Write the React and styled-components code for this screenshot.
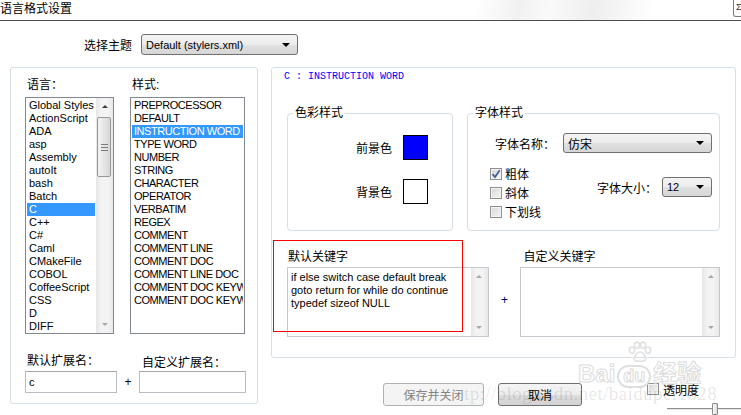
import React from 'react'
import styled, { createGlobalStyle } from 'styled-components'

const GlobalStyle = createGlobalStyle`
	html, body {
		margin: 0;
		padding: 0;
		background: #fff;
	}
	body {
		font-family: "Liberation Sans", "Noto Sans CJK SC", sans-serif;
		font-size: 12px;
		color: #000;
	}
	* {
		box-sizing: border-box;
	}
`

const languages = [
	'Global Styles', 'ActionScript', 'ADA', 'asp', 'Assembly', 'autoIt', 'bash', 'Batch', 'C',
	'C++', 'C#', 'Caml', 'CMakeFile', 'COBOL', 'CoffeeScript', 'CSS', 'D', 'DIFF', 'Erlang',
]
const styleNames = [
	'PREPROCESSOR', 'DEFAULT', 'INSTRUCTION WORD', 'TYPE WORD', 'NUMBER', 'STRING', 'CHARACTER',
	'OPERATOR', 'VERBATIM', 'REGEX', 'COMMENT', 'COMMENT LINE', 'COMMENT DOC', 'COMMENT LINE DOC',
	'COMMENT DOC KEYWORD', 'COMMENT DOC KEYWORD ERROR',
]

function Scrollbar({ thumb }) {
	return (
		<ScrollTrack>
			<ScrollButton><Arrow $up $dark={thumb} /></ScrollButton>
			{thumb ? <Thumb><Grip /></Thumb> : null}
			<ScrollFill />
			<ScrollButton><Arrow /></ScrollButton>
		</ScrollTrack>
	)
}

function Check({ checked, children }) {
	return (
		<CheckRow>
			<Box>{checked && <svg width="10" height="10" viewBox="0 0 10 10"><path d="M1.5 5.2 L4 8 L8.7 1.2" fill="none" stroke="#4a5e96" strokeWidth="1.8" /></svg>}</Box>
			<span>{children}</span>
		</CheckRow>
	)
}

export default function App() {
	return (
		<Window>
			<GlobalStyle />
			<TitleBar>
				<Title>语言格式设置</Title>
				<CloseBox>Σ</CloseBox>
			</TitleBar>

			<ThemeRow>
				<span>选择主题</span>
				<Combo $w={157}>
					<span>Default (stylers.xml)</span>
					<Caret />
				</Combo>
			</ThemeRow>

			<Body>
				<LeftGroup>
					<ListsRow>
						<ListCol>
							<ColLabel>语言：</ColLabel>
							<ListBox $w={89}>
								<Items>
									{languages.map(l => <Item key={l} $selected={l === 'C'}>{l}</Item>)}
								</Items>
								<Scrollbar thumb />
							</ListBox>
						</ListCol>
						<ListCol>
							<ColLabel>样式:</ColLabel>
							<ListBox $w={115}>
								<Items $caps>
									{styleNames.map((s, i) => <Item key={i} $selected={s === 'INSTRUCTION WORD'}>{s}</Item>)}
								</Items>
							</ListBox>
						</ListCol>
					</ListsRow>

					<ExtGrid>
						<ExtLabel>默认扩展名：</ExtLabel>
						<span />
						<ExtLabel $shift>自定义扩展名：</ExtLabel>
						<TextBox>c</TextBox>
						<Plus>+</Plus>
						<TextBox />
					</ExtGrid>
				</LeftGroup>

				<RightCol>
					<RightGroup>
						<StyleTitle>C : INSTRUCTION WORD</StyleTitle>
						<GroupsRow>
							<Group $w={166}>
								<Legend>色彩样式</Legend>
								<ColorRows>
									<ColorRow>
										<span>前景色</span>
										<Swatch $color="#0000ff" />
									</ColorRow>
									<ColorRow>
										<span>背景色</span>
										<Swatch $color="#ffffff" />
									</ColorRow>
								</ColorRows>
							</Group>
							<Group $w={253}>
								<Legend>字体样式</Legend>
								<FontNameRow>
									<span>字体名称：</span>
									<Combo $grow $h={20}>
										<ComboText>仿宋</ComboText>
										<Caret />
									</Combo>
								</FontNameRow>
								<FontOptions>
									<CheckList>
										<Check checked>粗体</Check>
										<Check>斜体</Check>
										<Check>下划线</Check>
									</CheckList>
									<SizeBox>
										<span>字体大小：</span>
										<Combo $w={50} $h={20}>
											<span>12</span>
											<Caret />
										</Combo>
									</SizeBox>
								</FontOptions>
							</Group>
						</GroupsRow>

						<KeywordsRow>
							<KwCol $w={203}>
								<KwLabel>默认关键字</KwLabel>
								<KwArea>
									<KwText>if else switch case default break goto return for while do continue typedef sizeof NULL</KwText>
									<Scrollbar />
								</KwArea>
							</KwCol>
							<KwPlus>+</KwPlus>
							<KwCol $w={201}>
								<KwLabel $indent>自定义关键字</KwLabel>
								<KwArea>
									<KwText />
									<Scrollbar />
								</KwArea>
							</KwCol>
						</KeywordsRow>

						<RedMark />
					</RightGroup>

					<ButtonRow>
						<Button $disabled $w={101}>保存并关闭</Button>
						<Button $w={84}>取消</Button>
						<Transparency>
							<OpacityCheck>
								<Box />
								<span>透明度</span>
							</OpacityCheck>
							<Slider><SliderThumb /></Slider>
						</Transparency>
					</ButtonRow>
				</RightCol>
			</Body>

			<WatermarkLogo>
				<svg width="26" height="22" viewBox="0 0 42 34">
					<g fill="none" stroke="#e0e0e0" strokeWidth="2.6">
						<ellipse cx="8" cy="14" rx="4" ry="5" />
						<ellipse cx="16" cy="6" rx="4" ry="5" />
						<ellipse cx="26" cy="6" rx="4" ry="5" />
						<ellipse cx="34" cy="14" rx="4" ry="5" />
						<path d="M12 29 C12 20 18 17 21 17 C24 17 30 20 30 29 C30 33 12 33 12 29 Z" />
					</g>
				</svg>
				<LogoText>Bai<LogoDu>du</LogoDu>经验</LogoText>
			</WatermarkLogo>
			<WatermarkUrl>tp://blog.csdn.net/baidupei1828</WatermarkUrl>
		</Window>
	)
}

const Window = styled.div`
	position: relative;
	width: 741px;
	height: 415px;
	overflow: hidden;
	background: #fff;
`
const TitleBar = styled.div`
	display: flex;
	justify-content: space-between;
	align-items: flex-start;
	height: 21px;
	border-bottom: 1px solid #4f4f4f;
	background: linear-gradient(100deg, #fff 0%, #fff 64%, #f1f1f1 70%, #fafafa 74%, #eeeeee 80%, #fff 88%, #fff 100%);
`
const Title = styled.div`
	font-size: 12px;
	line-height: 19px;
`
const CloseBox = styled.div`
	width: 14px;
	height: 17px;
	margin-right: -6px;
	border: 1px solid #7a7a7a;
	border-top: none;
	border-radius: 0 0 0 3px;
	font-size: 9px;
	line-height: 15px;
	padding-left: 2px;
	color: #333;
`
const ThemeRow = styled.div`
	display: flex;
	align-items: center;
	gap: 9px;
	height: 21px;
	margin-top: 13px;
	padding-left: 84px;
`
const Combo = styled.div`
	display: flex;
	align-items: center;
	justify-content: space-between;
	width: ${p => (p.$w ? p.$w + 'px' : 'auto')};
	flex: ${p => (p.$grow ? 1 : 'none')};
	height: ${p => p.$h || 21}px;
	padding: 0 7px 0 4px;
	border: 1px solid #707070;
	border-radius: 3px;
	background: linear-gradient(#f4f4f4, #ececec 50%, #e0e0e0 52%, #d6d6d6);
	font-size: 11px;
	white-space: nowrap;
`
const ComboText = styled.span`
	font-size: 12px;
`
const Caret = styled.span`
	width: 0;
	height: 0;
	border-left: 4px solid transparent;
	border-right: 4px solid transparent;
	border-top: 4px solid #000;
`
const Body = styled.div`
	display: flex;
	align-items: flex-start;
	margin-top: 12px;
	padding-left: 10px;
`
const LeftGroup = styled.div`
	width: 248px;
	height: 337px;
	padding: 10px 0 0 14px;
	border: 1px solid #d5dfe5;
	border-radius: 3px;
`
const ListsRow = styled.div`
	display: flex;
	gap: 16px;
`
const ListCol = styled.div`
	display: flex;
	flex-direction: column;
`
const ColLabel = styled.div`
	height: 14px;
	line-height: 14px;
	margin-bottom: 5px;
	padding-left: 2px;
`
const ListBox = styled.div`
	display: flex;
	width: ${p => p.$w}px;
	height: 237px;
	border: 1px solid #828790;
	background: #fff;
	overflow: hidden;
`
const Items = styled.div`
	flex: 1;
	min-width: 0;
	padding: 1px;
	overflow: hidden;
	letter-spacing: ${p => (p.$caps ? '-0.45px' : '0')};
`
const Item = styled.div`
	height: 13px;
	line-height: 13px;
	padding-left: 2px;
	font-size: 11px;
	white-space: nowrap;
	overflow: hidden;
	background: ${p => (p.$selected ? '#3399ff' : 'transparent')};
	color: ${p => (p.$selected ? '#fff' : '#000')};
`
const ScrollTrack = styled.div`
	display: flex;
	flex-direction: column;
	width: 17px;
	flex: none;
	background: linear-gradient(90deg, #e6e6e6, #f3f3f3 30%, #f3f3f3 70%, #e8e8e8);
`
const ScrollButton = styled.div`
	display: flex;
	align-items: center;
	justify-content: center;
	height: 17px;
	flex: none;
`
const Arrow = styled.span`
	width: 0;
	height: 0;
	border-left: 3px solid transparent;
	border-right: 3px solid transparent;
	${p => (p.$up ? 'border-bottom' : 'border-top')}: 3px solid ${p => (p.$dark ? '#3c3c3c' : '#a8a8a8')};
`
const Thumb = styled.div`
	display: flex;
	align-items: center;
	justify-content: center;
	height: 60px;
	margin: 2px 2px 0 1px;
	border: 1px solid #979797;
	border-radius: 2px;
	background: linear-gradient(90deg, #f2f2f2, #e6e6e6 50%, #d6d6d6);
`
const Grip = styled.span`
	width: 7px;
	height: 7px;
	background: repeating-linear-gradient(#7a7a7a 0 1px, transparent 1px 3px);
`
const ScrollFill = styled.div`
	flex: 1;
`
const ExtGrid = styled.div`
	display: grid;
	grid-template-columns: 92px 22px 107px;
	grid-template-rows: 16px 22px;
	row-gap: 1px;
	margin-top: 20px;
`
const ExtLabel = styled.div`
	line-height: 14px;
	padding-left: ${p => (p.$shift ? 3 : 2)}px;
	margin-top: ${p => (p.$shift ? 2 : 0)}px;
`
const TextBox = styled.div`
	height: 22px;
	padding: 0 3px;
	border: 1px solid #b9bdc4;
	border-top-color: #a4a9b0;
	font-size: 11px;
	line-height: 20px;
	background: #fff;
`
const Plus = styled.div`
	text-align: center;
	line-height: 22px;
	font-size: 12px;
`
const RightCol = styled.div`
	display: flex;
	flex-direction: column;
	width: 465px;
	margin-left: 13px;
`
const RightGroup = styled.div`
	position: relative;
	height: 291px;
	padding: 3px 15px 0 15px;
	border: 1px solid #d5dfe5;
	border-radius: 3px;
`
const StyleTitle = styled.div`
	margin-left: -3px;
	font-family: "Liberation Mono", monospace;
	font-size: 10px;
	line-height: 12px;
	color: #0000ff;
	white-space: pre;
`
const GroupsRow = styled.div`
	display: flex;
	gap: 14px;
	margin-top: 30px;
`
const Group = styled.div`
	width: ${p => p.$w}px;
	height: 118px;
	border: 1px solid #d5dfe5;
	border-radius: 4px;
`
const Legend = styled.div`
	width: fit-content;
	margin: -8px 0 0 5px;
	padding: 0 2px;
	line-height: 14px;
	background: #fff;
`
const ColorRows = styled.div`
	display: flex;
	flex-direction: column;
	align-items: flex-end;
	gap: 19px;
	margin-top: 15px;
	padding-right: 24px;
`
const ColorRow = styled.div`
	display: flex;
	align-items: center;
	gap: 11px;
`
const Swatch = styled.div`
	width: 25px;
	height: 25px;
	border: 1px solid #000;
	background: ${p => p.$color};
`
const FontNameRow = styled.div`
	display: flex;
	align-items: center;
	gap: 8px;
	margin-top: 13px;
	padding: 0 7px 0 27px;
`
const FontOptions = styled.div`
	display: flex;
	align-items: flex-start;
	margin-top: 11px;
	padding: 0 7px 0 22px;
`
const CheckList = styled.div`
	display: flex;
	flex-direction: column;
`
const CheckRow = styled.div`
	display: flex;
	align-items: center;
	gap: 3px;
	height: 19px;
`
const Box = styled.span`
	display: flex;
	align-items: center;
	justify-content: center;
	width: 12px;
	height: 12px;
	flex: none;
	border: 1px solid #8f8f8f;
	box-shadow: inset 0 0 0 1px #f4f4f4;
	background: linear-gradient(135deg, #d6d6d6, #f6f6f6);
`
const SizeBox = styled.div`
	display: flex;
	align-items: center;
	gap: 5px;
	margin: 13px 0 0 auto;
`
const KeywordsRow = styled.div`
	display: flex;
	align-items: flex-start;
	margin-top: 19px;
`
const KwCol = styled.div`
	display: flex;
	flex-direction: column;
	width: ${p => p.$w}px;
`
const KwLabel = styled.div`
	line-height: 14px;
	margin-bottom: 3px;
	padding-left: ${p => (p.$indent ? 3 : 1)}px;
`
const KwArea = styled.div`
	display: flex;
	height: 70px;
	border: 1px solid #c4c8ce;
	background: #fff;
`
const KwText = styled.div`
	flex: 1;
	padding: 3px 3px;
	font-size: 11px;
	line-height: 13px;
`
const KwPlus = styled.div`
	width: 32px;
	margin-top: 43px;
	text-align: center;
	line-height: 14px;
	color: #000060;
`
const RedMark = styled.div`
	position: absolute;
	left: 1px;
	top: 172px;
	width: 190px;
	height: 92px;
	border: 1px solid #ff0000;
	pointer-events: none;
`
const ButtonRow = styled.div`
	display: flex;
	align-items: flex-start;
	margin-top: 25px;
	padding-left: 112px;
`
const Button = styled.div`
	display: flex;
	align-items: center;
	justify-content: center;
	flex: none;
	width: ${p => p.$w}px;
	height: 23px;
	margin-right: 14px;
	border: 1px solid ${p => (p.$disabled ? '#adb2b5' : '#707070')};
	border-radius: 3px;
	background: ${p => (p.$disabled
		? '#f4f4f4'
		: 'linear-gradient(#f4f4f4, #ececec 50%, #dedede 52%, #d2d2d2)')};
	color: ${p => (p.$disabled ? '#838383' : '#000')};
	font-size: 12px;
`
const Transparency = styled.div`
	display: flex;
	flex-direction: column;
	flex: none;
	margin-left: 51px;
`
const OpacityCheck = styled.div`
	display: flex;
	align-items: center;
	gap: 4px;
	height: 12px;
`
const Slider = styled.div`
	position: relative;
	width: 100px;
	height: 13px;
	margin: 7px 0 0 20px;
	&::before {
		content: "";
		position: absolute;
		left: 0;
		right: 0;
		top: 6px;
		border-top: 1px solid #8e8e8e;
		border-bottom: 1px solid #e6e6e6;
	}
`
const SliderThumb = styled.div`
	position: absolute;
	left: 45px;
	top: 1px;
	width: 6px;
	height: 12px;
	border: 1px solid #8a8a8a;
	border-radius: 1px;
	background: linear-gradient(90deg, #fafafa, #dcdcdc);
`
const WatermarkLogo = styled.div`
	position: absolute;
	left: 578px;
	top: 341px;
	display: flex;
	flex-direction: column;
	align-items: flex-start;
	pointer-events: none;
	svg {
		margin-left: 49px;
	}
`
const LogoText = styled.div`
	margin-top: -1px;
	font-family: "Liberation Sans", "Noto Sans CJK SC", sans-serif;
	font-size: 24px;
	font-weight: bold;
	line-height: 24px;
	color: transparent;
	white-space: nowrap;
	-webkit-text-stroke: 1px #dcdcdc;
`
const LogoDu = styled.span`
	display: inline-block;
	margin: 0 2px;
	padding: 0 4px;
	border: 2px solid #e0e0e0;
	border-radius: 12px;
	font-size: 18px;
	line-height: 19px;
`
const WatermarkUrl = styled.div`
	position: absolute;
	left: 464px;
	top: 383px;
	font-family: "Liberation Serif", serif;
	font-size: 19px;
	letter-spacing: 0.4px;
	color: rgba(0, 0, 0, 0.11);
	white-space: nowrap;
	pointer-events: none;
`
